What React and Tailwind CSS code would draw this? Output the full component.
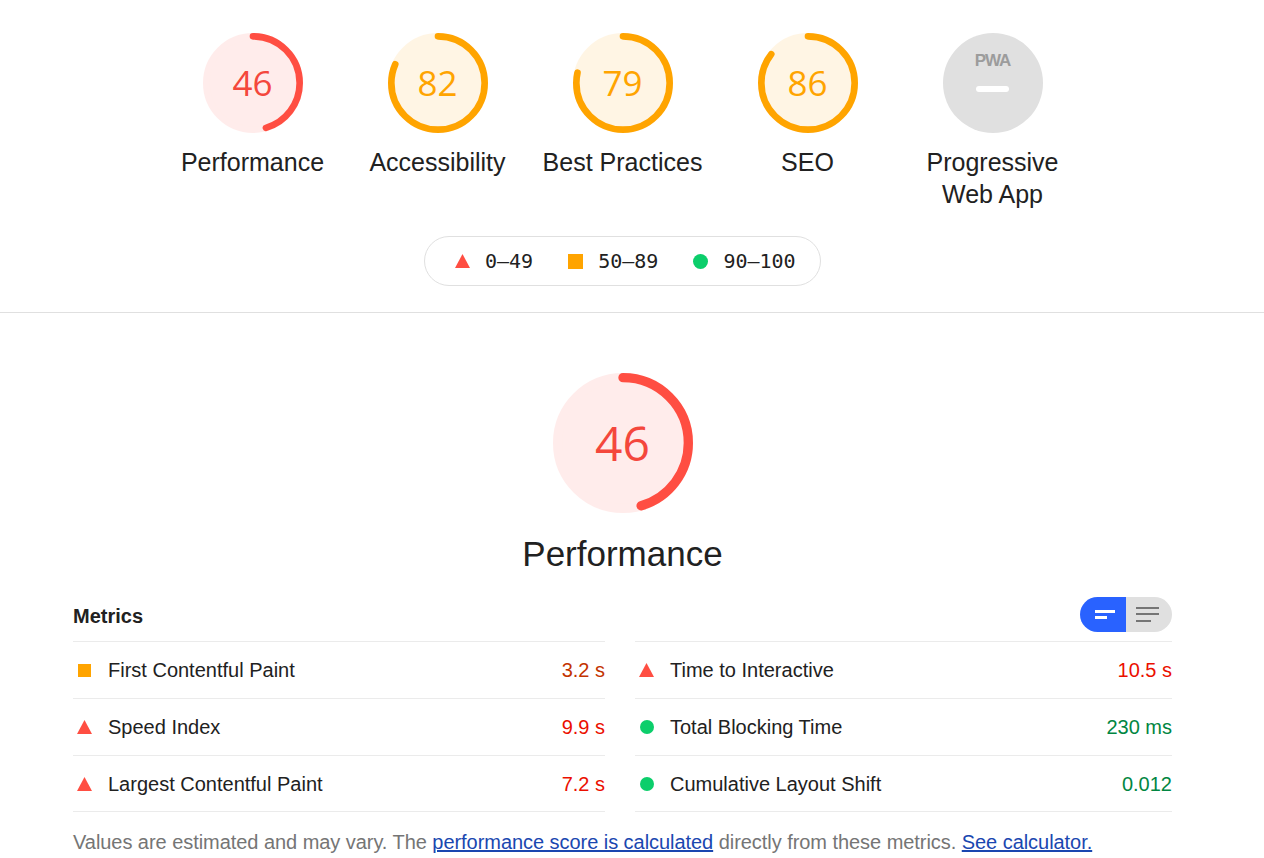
import React from 'react';

const COLORS = {
    fail: '#ff4e42',
    average: '#ffa400',
    pass: '#0cce6b',
};

const CIRC = 2 * Math.PI * 56;

const Gauge = ({ score, kind, big }) => {
    const color = COLORS[kind];
    return (
        <div className={big ? 'relative w-[140px] h-[140px]' : 'relative w-[100px] h-[100px]'}>
            <svg viewBox="0 0 120 120" className="w-full h-full">
                <circle cx="60" cy="60" r="56" fill={color} stroke={color} strokeWidth="8" opacity="0.1" />
                <circle
                    cx="60"
                    cy="60"
                    r="56"
                    fill="none"
                    stroke={color}
                    strokeWidth="8"
                    strokeLinecap="round"
                    strokeDasharray={`${(score / 100) * CIRC - 2} ${CIRC}`}
                    transform="rotate(-90 60 60)"
                />
            </svg>
            <div
                className={
                    'absolute inset-0 flex items-center justify-center font-["Open_Sans",sans-serif] ' +
                    (big ? 'text-[48px]' : 'text-[35px]') +
                    (kind === 'fail' ? ' text-[#f4473c]' : ' text-[#ffa400]')
                }
            >
                {score}
            </div>
        </div>
    );
};

const PwaGauge = () => (
    <div className="relative w-[100px] h-[100px] rounded-full bg-[#e0e0e0] flex flex-col items-center">
        <div className="mt-[19px] h-[17px] flex items-center font-['Liberation_Sans',Arial,sans-serif] font-bold text-[17px] tracking-[-1px] text-[#9c9c9c]">
            PWA
        </div>
        <div className="mt-[17px] w-[33px] h-[6px] rounded-full bg-white" />
    </div>
);

const Triangle = ({ className }) => (
    <svg viewBox="0 0 14 13" className={className}>
        <polygon points="7,0 14,13 0,13" fill={COLORS.fail} />
    </svg>
);

const Icon = ({ kind }) => {
    if (kind === 'fail') return <Triangle className="w-[15px] h-[14px]" />;
    if (kind === 'average') return <div className="w-[13px] h-[13px] bg-[#ffa400]" />;
    return <div className="w-[14px] h-[14px] rounded-full bg-[#0cce6b]" />;
};

const valueColor = {
    fail: 'text-[#eb0f00]',
    average: 'text-[#c33300]',
    pass: 'text-[#018642]',
};

const categories = [
    { label: 'Performance', score: 46, kind: 'fail' },
    { label: 'Accessibility', score: 82, kind: 'average' },
    { label: 'Best Practices', score: 79, kind: 'average' },
    { label: 'SEO', score: 86, kind: 'average' },
];

const metrics = [
    { name: 'First Contentful Paint', value: '3.2 s', kind: 'average' },
    { name: 'Time to Interactive', value: '10.5 s', kind: 'fail' },
    { name: 'Speed Index', value: '9.9 s', kind: 'fail' },
    { name: 'Total Blocking Time', value: '230 ms', kind: 'pass' },
    { name: 'Largest Contentful Paint', value: '7.2 s', kind: 'fail' },
    { name: 'Cumulative Layout Shift', value: '0.012', kind: 'pass' },
];

const App = () => {
    return (
        <div className="min-h-[858px] bg-white text-[#212121] font-['Liberation_Sans',Arial,sans-serif]">
            <div className="w-[1245px] pt-[33px] pb-[26px] flex flex-col items-center">
                <div className="flex items-start">
                    {categories.map((c) => (
                        <div key={c.label} className="w-[185px] flex flex-col items-center">
                            <Gauge score={c.score} kind={c.kind} />
                            <div className="mt-[13px] text-[25px] leading-[32px] text-center">{c.label}</div>
                        </div>
                    ))}
                    <div className="w-[185px] flex flex-col items-center">
                        <PwaGauge />
                        <div className="mt-[13px] w-[160px] text-[25px] leading-[32px] text-center">Progressive Web App</div>
                    </div>
                </div>

                <div className="mt-[26px] h-[50px] w-[397px] rounded-full border border-[#e0e0e0] flex items-center pl-[30px] font-['DejaVu_Sans_Mono',monospace] text-[20px]">
                    <Triangle className="w-[15px] h-[14px]" />
                    <span className="ml-[15px]">0–49</span>
                    <div className="ml-[35px] w-[15px] h-[15px] bg-[#ffa400]" />
                    <span className="ml-[15px]">50–89</span>
                    <div className="ml-[35px] w-[15px] h-[15px] rounded-full bg-[#0cce6b]" />
                    <span className="ml-[15px]">90–100</span>
                </div>
            </div>

            <div className="h-px bg-[#e0e0e0]" />

            <div className="w-[1245px] pt-[60px] flex flex-col items-center">
                <Gauge score={46} kind="fail" big />
                <div className="mt-[21px] text-[35px] leading-[40px]">Performance</div>

                <div className="w-[1099px] mt-[23px]">
                    <div className="flex justify-between items-center h-[35px]">
                        <div className="text-[20px] font-bold pt-[3px]">Metrics</div>
                        <div className="w-[92px] h-[35px] rounded-full overflow-hidden flex">
                            <div className="w-[46px] h-full bg-[#2962ff] flex items-center justify-center pl-[3px]">
                                <svg viewBox="0 0 20 9" className="w-[20px] h-[9px]">
                                    <rect x="0" y="0" width="20" height="3" fill="#fff" />
                                    <rect x="0" y="6" width="12" height="3" fill="#fff" />
                                </svg>
                            </div>
                            <div className="w-[46px] h-full bg-[#e0e0e0] flex items-center justify-center pr-[3px]">
                                <svg viewBox="0 0 23 15" className="w-[23px] h-[15px]">
                                    <rect x="0" y="0" width="23" height="2" fill="#757575" />
                                    <rect x="0" y="6" width="23" height="2" fill="#757575" />
                                    <rect x="0" y="13" width="15" height="2" fill="#757575" />
                                </svg>
                            </div>
                        </div>
                    </div>

                    <div className="mt-[9px] grid grid-cols-[532px_537px] gap-x-[30px]">
                        {metrics.map((m, i) => (
                            <div
                                key={m.name}
                                className={
                                    'h-[57px] flex items-center border-t border-[#ebebeb] ' +
                                    (i >= 4 ? 'border-b' : '') +
                                    (i % 2 === 1 ? ' pl-[4px]' : ' pl-[4px]')
                                }
                            >
                                <div className="w-[15px] flex justify-center">
                                    <Icon kind={m.kind} />
                                </div>
                                <div className="ml-[16px] text-[20px]">{m.name}</div>
                                <div className={'ml-auto text-[20px] ' + valueColor[m.kind]}>{m.value}</div>
                            </div>
                        ))}
                    </div>

                    <p className="mt-[18px] text-[20px] leading-[24px] text-[#757575] tracking-[-0.05px]">
                        Values are estimated and may vary. The{' '}
                        <a href="#" className="text-[#1a47b0] underline">performance score is calculated</a>{' '}
                        directly from these metrics.{' '}
                        <a href="#" className="text-[#1a47b0] underline">See calculator.</a>
                    </p>
                </div>
            </div>
        </div>
    );
};

export default App;
